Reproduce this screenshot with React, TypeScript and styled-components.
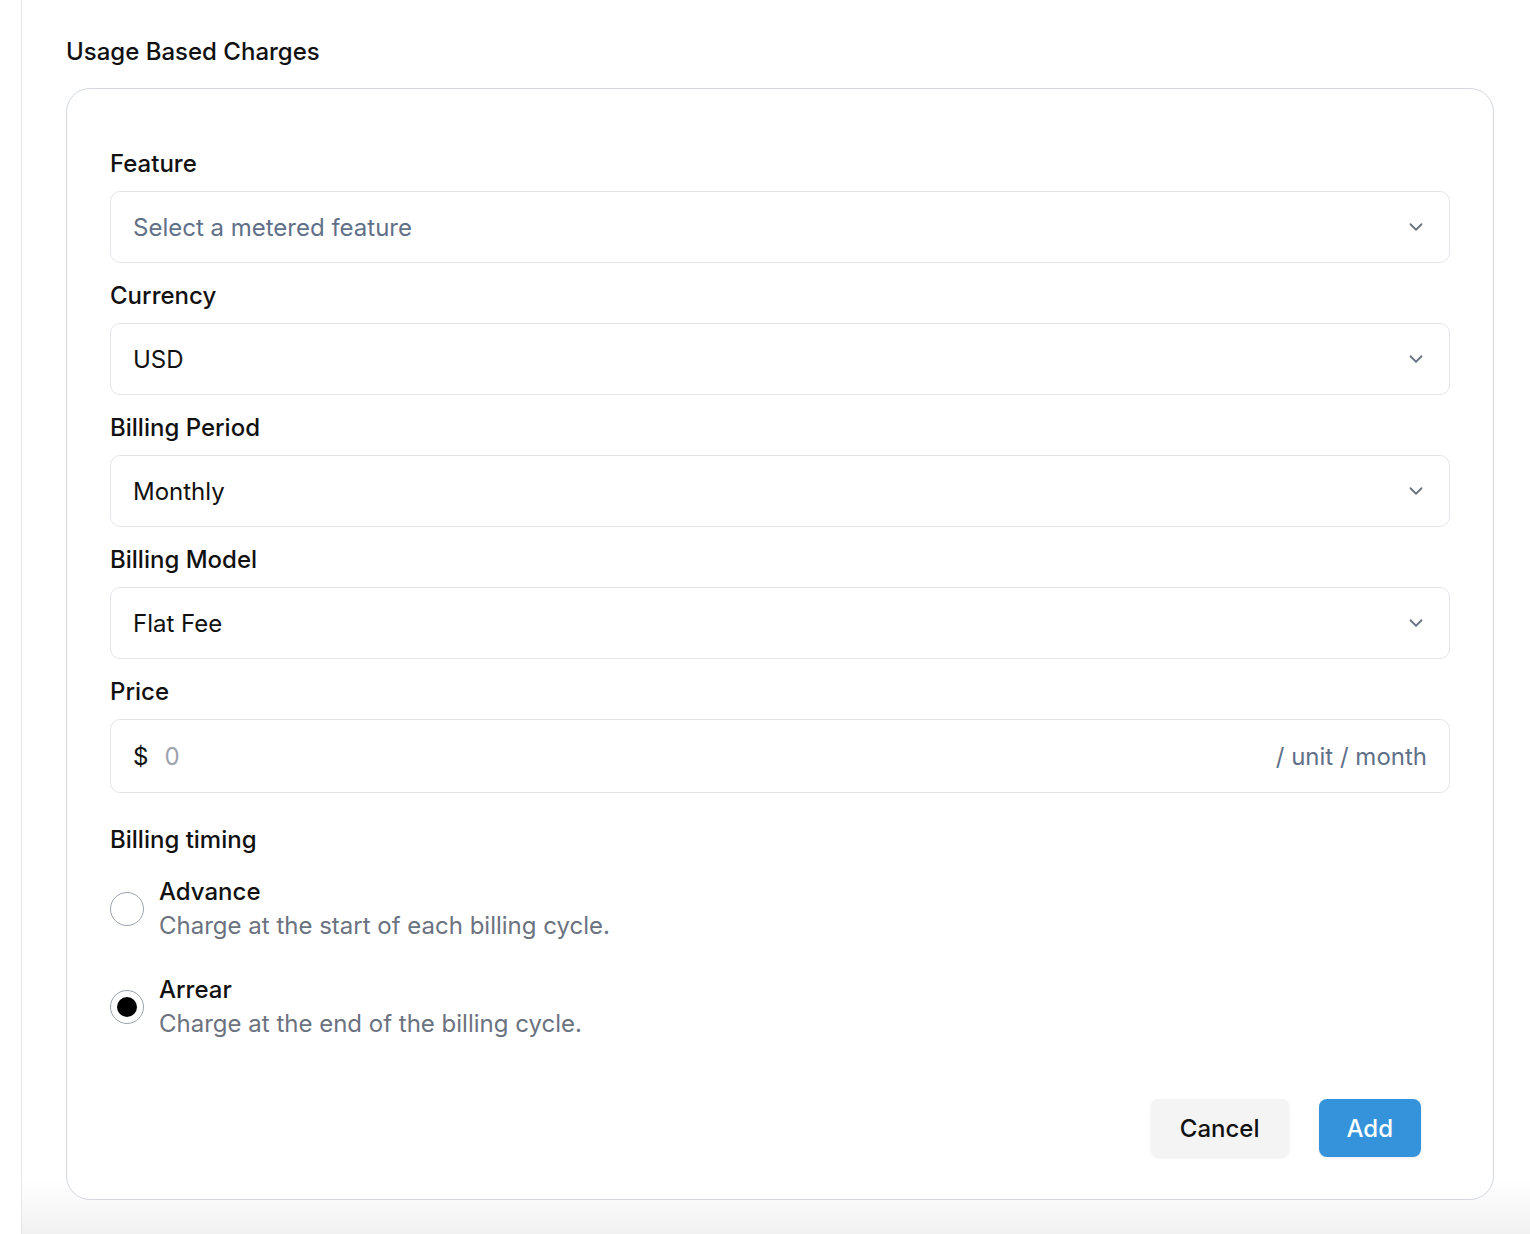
import styled, { createGlobalStyle } from "styled-components";

const Global = createGlobalStyle`
  body {
    margin: 0;
    font-family: Inter, "Noto Sans", sans-serif;
    color: #111;
    background: #fff;
  }
`;

const Page = styled.div`
  margin-left: 21px;
  border-left: 1px solid #e5e7eb;
  min-height: 1234px;
  padding: 34px 36px 0 44px;
  box-sizing: border-box;
  background: linear-gradient(to bottom, #fff 1180px, #f1f1f1 1234px);
`;

const Title = styled.h2`
  margin: 0 0 18px;
  font-size: 24px;
  font-weight: 500;
  line-height: 36px;
`;

const Card = styled.div`
  border: 1px solid #d4d8de;
  border-radius: 24px;
  background: #fff;
  padding: 60px 43px 42px;
  display: flex;
  flex-direction: column;
`;

const Field = styled.div`
  display: flex;
  flex-direction: column;
  gap: 12px;
  margin-bottom: 18px;
`;

const Label = styled.div`
  font-size: 24px;
  font-weight: 500;
  line-height: 30px;
`;

const Box = styled.div<{ $tall?: boolean }>`
  height: ${p => (p.$tall ? 72 : 70)}px;
  border: 1px solid #e2e5ea;
  border-radius: 10px;
  display: flex;
  align-items: center;
  padding: 0 22px;
  font-size: 24px;
  gap: 16px;
`;

const Value = styled.span<{ $placeholder?: boolean }>`
  flex: 1;
  color: ${p => (p.$placeholder ? "#5f7088" : "#111")};
`;

const Dollar = styled.span`
  color: #111;
`;

const Hint = styled.span<{ $grow?: boolean }>`
  color: ${p => (p.$grow ? "#9ca3af" : "#5f7088")};
  flex: ${p => (p.$grow ? 1 : "none")};
`;

const Section = styled.div`
  margin-top: 14px;
  display: flex;
  flex-direction: column;
`;

const Option = styled.div`
  display: flex;
  align-items: center;
  gap: 15px;
  margin-top: 22px;
  & + & {
    margin-top: 34px;
  }
`;

const Radio = styled.span<{ $on?: boolean }>`
  width: 34px;
  height: 34px;
  border-radius: 50%;
  border: 1px solid #9ca3af;
  box-sizing: border-box;
  display: flex;
  align-items: center;
  justify-content: center;
  &::after {
    content: "";
    width: 20px;
    height: 20px;
    border-radius: 50%;
    background: ${p => (p.$on ? "#000" : "transparent")};
  }
`;

const OptionText = styled.div`
  display: flex;
  flex-direction: column;
  gap: 4px;
`;

const OptionTitle = styled.div`
  font-size: 24px;
  font-weight: 500;
  line-height: 30px;
`;

const OptionDesc = styled.div`
  font-size: 24px;
  line-height: 30px;
  color: #6b7280;
`;

const Footer = styled.div`
  display: flex;
  justify-content: flex-end;
  gap: 30px;
  padding-right: 29px;
  margin-top: 60px;
`;

const Button = styled.button<{ $primary?: boolean }>`
  height: 58px;
  padding: 0 ${p => (p.$primary ? 28 : 29)}px;
  border: none;
  border-radius: 8px;
  font-family: inherit;
  font-size: 24px;
  font-weight: 500;
  background: ${p => (p.$primary ? "#3593db" : "#f4f4f5")};
  color: ${p => (p.$primary ? "#fff" : "#111")};
  box-shadow: 0 1px 3px rgba(0, 0, 0, 0.08);
`;

const Chevron = () => (
  <svg width="22" height="22" viewBox="0 0 24 24" fill="none" stroke="#6b7280" strokeWidth="2" strokeLinecap="round" strokeLinejoin="round">
    <path d="m6 9 6 6 6-6" />
  </svg>
);

const selects = [
  { label: "Feature", value: "Select a metered feature", placeholder: true },
  { label: "Currency", value: "USD" },
  { label: "Billing Period", value: "Monthly" },
  { label: "Billing Model", value: "Flat Fee" },
];

export default function App() {
  return (
    <>
      <Global />
      <Page>
        <Title>Usage Based Charges</Title>
        <Card>
          {selects.map(s => (
            <Field key={s.label}>
              <Label>{s.label}</Label>
              <Box>
                <Value $placeholder={s.placeholder}>{s.value}</Value>
                <Chevron />
              </Box>
            </Field>
          ))}
          <Field>
            <Label>Price</Label>
            <Box $tall>
              <Dollar>$</Dollar>
              <Hint $grow>0</Hint>
              <Hint>/ unit / month</Hint>
            </Box>
          </Field>
          <Section>
            <Label>Billing timing</Label>
            <Option>
              <Radio />
              <OptionText>
                <OptionTitle>Advance</OptionTitle>
                <OptionDesc>Charge at the start of each billing cycle.</OptionDesc>
              </OptionText>
            </Option>
            <Option>
              <Radio $on />
              <OptionText>
                <OptionTitle>Arrear</OptionTitle>
                <OptionDesc>Charge at the end of the billing cycle.</OptionDesc>
              </OptionText>
            </Option>
          </Section>
          <Footer>
            <Button>Cancel</Button>
            <Button $primary>Add</Button>
          </Footer>
        </Card>
      </Page>
    </>
  );
}
